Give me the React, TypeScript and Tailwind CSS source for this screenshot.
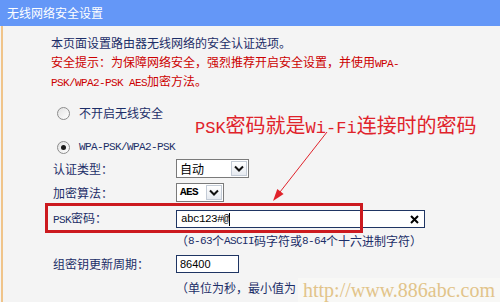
import React from "react";

const M = ({ children, className = "" }: { children: React.ReactNode; className?: string }) => (
    <span className={`font-['Liberation_Mono',monospace] text-[11px] leading-none tracking-[-0.6px] ${className}`}>{children}</span>
);

function Chevron() {
    return (
        <svg width="10" height="7" viewBox="0 0 10 7">
            <polyline points="1,1.5 5,5.5 9,1.5" fill="none" stroke="#111" strokeWidth="2" />
        </svg>
    );
}

function Select({ width, children }: { width: string; children: React.ReactNode }) {
    return (
        <div className={`flex h-[19px] items-stretch border border-[#7a7a7a] bg-white ${width}`}>
            <div className="flex flex-1 items-center pl-[3px] text-[12px] leading-none text-black">{children}</div>
            <div className="m-[1px] flex w-[16px] items-center justify-center border border-[#c3cbd6] bg-gradient-to-b from-white to-[#e6eaf0]">
                <Chevron />
            </div>
        </div>
    );
}

function Radio({ checked }: { checked?: boolean }) {
    return (
        <span className="flex h-[13px] w-[13px] items-center justify-center rounded-full border border-[#8c8c8c] bg-gradient-to-br from-[#e2e2e2] to-white">
            {checked && <span className="h-[5px] w-[5px] rounded-full bg-[#1a1a1a]" />}
        </span>
    );
}

export default function App() {
    return (
        <div className="relative h-[302px] w-[500px] overflow-hidden bg-[#f4f4f4] font-['Noto_Sans_CJK_SC',sans-serif] text-[#1c2e68]">
            {/* Title bar */}
            <div className="flex h-[26px] items-center bg-[#6497f7] pl-[7px] text-[12px] leading-none text-white">
                无线网络安全设置
            </div>

            {/* Body */}
            <div className="ml-[1px] h-[276px] border-l-2 border-[#f0c48a] pl-[48px] pt-[8px]">
                <p className="h-[18px] text-[12px] leading-[18px]">本页面设置路由器无线网络的安全认证选项。</p>
                <p className="h-[38px] text-[12px] leading-[19px] text-[#cc0000]">
                    安全提示：为保障网络安全，强烈推荐开启安全设置，并使用<M>WPA-</M>
                    <br />
                    <M>PSK/WPA2-PSK AES</M>加密方法。
                </p>

                {/* Radios */}
                <div className="mt-[13px] flex h-[20px] items-center pl-[6px]">
                    <Radio />
                    <span className="ml-[9px] text-[12px] leading-none">不开启无线安全</span>
                </div>
                <div className="mt-[14px] flex h-[20px] items-center pl-[6px]">
                    <Radio checked />
                    <M className="ml-[9px]">WPA-PSK/WPA2-PSK</M>
                </div>

                {/* Form rows */}
                <div className="ml-[2px] text-[12px]">
                    <div className="mt-[1px] flex h-[21px] items-center">
                        <span className="w-[123px] leading-none">认证类型：</span>
                        <Select width="w-[73px]">自动</Select>
                    </div>
                    <div className="mt-[3px] flex h-[21px] items-center">
                        <span className="w-[123px] leading-none">加密算法：</span>
                        <Select width="w-[48px]">
                            <M className="font-bold">AES</M>
                        </Select>
                    </div>
                    <div className="mt-[5px] flex h-[22px] items-center">
                        <span className="w-[123px] leading-none">
                            <M>PSK</M>密码：
                        </span>
                        <div className="relative flex h-[18px] w-[249px] items-center border border-[#1f3563] bg-white pl-[4px]">
                            <M className="text-black">abc123#@</M>
                            <span className="h-[13px] w-px bg-black" />
                            <svg className="absolute right-[5px]" width="9" height="9" viewBox="0 0 9 9">
                                <path d="M1 1 L8 8 M8 1 L1 8" stroke="#000" strokeWidth="2" />
                            </svg>
                        </div>
                    </div>
                    <div className="mt-[2px] flex h-[18px] items-center pl-[123px] leading-none">
                        （<M>8-63</M>个<M>ASCII</M>码字符或<M>8-64</M>个十六进制字符）
                    </div>
                    <div className="mt-[3px] flex h-[22px] items-center">
                        <span className="w-[123px] leading-none">组密钥更新周期：</span>
                        <div className="flex h-[18px] w-[63px] items-center border border-[#1f3563] bg-white pl-[3px] font-['Liberation_Sans',sans-serif] text-[11px] text-black">
                            86400
                        </div>
                    </div>
                    <div className="mt-[4px] flex h-[18px] items-center pl-[123px] leading-none">
                        （单位为秒，最小值为
                    </div>
                </div>
            </div>

            {/* Annotation box around PSK row */}
            <div className="absolute left-[45px] top-[203px] h-[30px] w-[318px] border-[3px] border-[#cc1a1f]" />

            {/* Annotation text */}
            <div className="absolute left-[195px] top-[113px] text-[20px] leading-[24px] text-[#e0232b]">
                <span className="font-['Liberation_Mono',monospace] text-[17px]">PSK</span>密码就是
                <span className="font-['Liberation_Mono',monospace] text-[17px]">Wi-Fi</span>连接时的密码
            </div>

            {/* Arrow */}
            <svg className="absolute left-0 top-0" width="500" height="302" viewBox="0 0 500 302">
                <line x1="327" y1="132" x2="280" y2="192" stroke="#e0232b" strokeWidth="1" />
                <polygon points="273,201 283.6,194 277.3,189" fill="#e0232b" />
            </svg>

            {/* Watermark */}
            <div className="absolute left-[298px] top-[278px] h-[24px] w-[202px] bg-[#f8f8f6] pl-[5px] font-['Liberation_Serif',serif] text-[20px] leading-[24px] text-[#e2c48a]">
                http://www.886abc.com
            </div>
        </div>
    );
}
